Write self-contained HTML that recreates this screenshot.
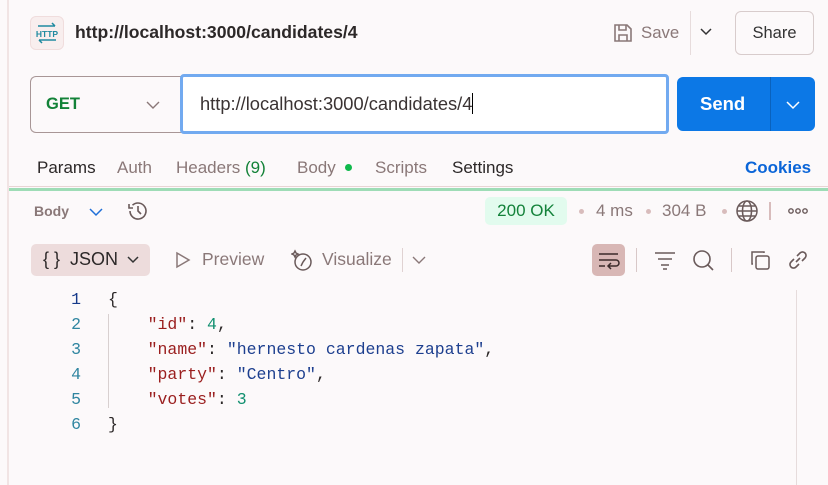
<!DOCTYPE html>
<html><head><style>
*{margin:0;padding:0;box-sizing:border-box}
body{width:828px;height:485px;background:#fcf9fa;font-family:"Liberation Sans",sans-serif;position:relative;overflow:hidden;color:#3a3333}
.a{position:absolute;white-space:nowrap}
.mono{font-family:"Liberation Mono",monospace;font-size:16.5px}
</style></head><body>
<div class="a" style="left:7px;top:0;width:2px;height:485px;background:#f1e4e4"></div>
<div class="a" style="left:30px;top:16px;width:34px;height:34px;border:1px solid #f0dddd;border-radius:6px;background:#f8eeee"></div>
<svg class="a" style="left:34px;top:20px" width="26" height="26" viewBox="0 0 26 26"><path d="M4 6h17M18 3l3 3" stroke="#1f8aa0" stroke-width="1.5" fill="none"/><text x="13" y="17" font-size="8.5" font-family="Liberation Sans" font-weight="bold" text-anchor="middle" fill="#1f8aa0">HTTP</text><path d="M5 20h17M8 23l-3-3" stroke="#1f8aa0" stroke-width="1.5" fill="none"/></svg>
<div class="a" style="left:75px;top:22px;font-size:17.6px;font-weight:bold;color:#2c2828">http://localhost:3000/candidates/4</div>
<svg class="a" style="left:612px;top:22px" width="22" height="22" viewBox="0 0 22 22" fill="none" stroke="#8a7878" stroke-width="1.6"><path d="M3 3h12l4 4v12H3z"/><path d="M7 3v5h7V3M7 19v-6h8v6"/></svg>
<div class="a" style="left:641px;top:23px;font-size:16.8px;color:#8a7878">Save</div>
<div class="a" style="left:690px;top:11px;width:1px;height:44px;background:#e7dcdc"></div>
<svg class="a" style="left:700px;top:27px" width="12" height="10"><path d="M1 2l5 5 5-5" stroke="#333" stroke-width="1.5" fill="none"/></svg>
<div class="a" style="left:735px;top:11px;width:79px;height:44px;border:1px solid #d8cccc;border-radius:6px;font-size:16.5px;text-align:center;line-height:42px;color:#333">Share</div>
<div class="a" style="left:30px;top:76px;width:152px;height:57px;border:1px solid #a89696;border-right:none;border-radius:6px 0 0 6px"></div>
<div class="a" style="left:46px;top:95px;font-size:16.5px;font-weight:bold;color:#138238">GET</div>
<svg class="a" style="left:146px;top:100px" width="14" height="10"><path d="M1 2l6 6 6-6" stroke="#8a7878" stroke-width="1.4" fill="none"/></svg>
<div class="a" style="left:180px;top:74px;width:489px;height:60px;border:3px solid #72aaf0;border-radius:4px;background:#fff"></div>
<div class="a" style="left:200px;top:93px;font-size:18.3px;color:#3a3333">http://localhost:3000/candidates/4<span style="display:inline-block;width:1px;height:21px;background:#000;vertical-align:-4px"></span></div>
<div class="a" style="left:677px;top:77px;width:138px;height:54px;background:#0c78e6;border-radius:6px"></div>
<div class="a" style="left:770px;top:77px;width:1px;height:54px;background:#0a62bd"></div>
<div class="a" style="left:700px;top:93px;font-size:18.5px;font-weight:bold;color:#fff">Send</div>
<svg class="a" style="left:786px;top:100px" width="14" height="10"><path d="M1 2l6 6 6-6" stroke="#fff" stroke-width="1.5" fill="none"/></svg>
<div class="a" style="left:37px;top:158px;font-size:17px;color:#2c2828">Params</div>
<div class="a" style="left:117px;top:158px;font-size:17px;color:#8a7878">Auth</div>
<div class="a" style="left:176px;top:158px;font-size:17px;color:#8a7878">Headers <span style="color:#138238">(9)</span></div>
<div class="a" style="left:297px;top:158px;font-size:17px;color:#8a7878">Body</div>
<div class="a" style="left:345px;top:164px;width:7px;height:7px;border-radius:50%;background:#10b94c"></div>
<div class="a" style="left:375px;top:158px;font-size:17px;color:#8a7878">Scripts</div>
<div class="a" style="left:452px;top:158px;font-size:17px;color:#2c2828">Settings</div>
<div class="a" style="left:745px;top:158px;font-size:17px;font-weight:bold;color:#0b65d8">Cookies</div>
<div class="a" style="left:9px;top:186px;width:819px;height:1px;background:#e8d4d4"></div>
<div class="a" style="left:9px;top:188px;width:819px;height:3px;background:#9edcb6"></div>
<div class="a" style="left:34px;top:203px;font-size:14px;font-weight:bold;color:#8a7878">Body</div>
<svg class="a" style="left:89px;top:207px" width="14" height="10"><path d="M1 2l6 6 6-6" stroke="#1f6fd8" stroke-width="1.5" fill="none"/></svg>
<svg class="a" style="left:126px;top:200px" width="24" height="22" viewBox="0 0 24 22" fill="none" stroke="#6a5a5a" stroke-width="1.6"><path d="M4 11a8 8 0 1 0 2.5-5.8"/><path d="M3 4v4h4M12 6v5l3 3"/></svg>
<div class="a" style="left:485px;top:197px;width:82px;height:28px;background:#e2fbee;border-radius:5px;font-size:17px;color:#13823a;text-align:center;line-height:28px">200 OK</div>
<div class="a" style="left:579px;top:209px;width:5px;height:5px;border-radius:50%;background:#d8bcbc"></div>
<div class="a" style="left:596px;top:201px;font-size:17px;color:#8a7878">4 ms</div>
<div class="a" style="left:646px;top:209px;width:5px;height:5px;border-radius:50%;background:#d8bcbc"></div>
<div class="a" style="left:662px;top:201px;font-size:17px;color:#8a7878">304 B</div>
<div class="a" style="left:722px;top:209px;width:5px;height:5px;border-radius:50%;background:#d8bcbc"></div>
<svg class="a" style="left:735px;top:199px" width="24" height="24" viewBox="0 0 24 24" fill="none" stroke="#6a5a5a" stroke-width="1.5"><circle cx="12" cy="12" r="10"/><ellipse cx="12" cy="12" rx="4.5" ry="10"/><path d="M2 12h20M4 7h16M4 17h16"/></svg>
<div class="a" style="left:769px;top:202px;width:2px;height:18px;background:#d8bcbc"></div>
<svg class="a" style="left:788px;top:207px" width="20" height="8" fill="none" stroke="#6a5a5a" stroke-width="1.4"><circle cx="3" cy="4" r="2.2"/><circle cx="10" cy="4" r="2.2"/><circle cx="17" cy="4" r="2.2"/></svg>
<div class="a" style="left:31px;top:244px;width:119px;height:32px;background:#eddcdc;border-radius:5px"></div>
<div class="a" style="left:43px;top:249px;font-size:18px;color:#2c2828">{ }&nbsp; JSON</div>
<svg class="a" style="left:127px;top:256px" width="12" height="8"><path d="M1 1l5 5 5-5" stroke="#333" stroke-width="1.5" fill="none"/></svg>
<svg class="a" style="left:175px;top:251px" width="16" height="18"><path d="M2 2l12 7-12 7z" stroke="#8a7878" stroke-width="1.5" fill="none"/></svg>
<div class="a" style="left:202px;top:249px;font-size:17.5px;color:#8a7878">Preview</div>
<svg class="a" style="left:291px;top:248px" width="24" height="24" viewBox="0 0 24 24" fill="none" stroke="#6a5a5a" stroke-width="1.5"><circle cx="12" cy="14" r="8"/><path d="M12 14l3-4M12 14l-2 4M4 3l1 2 2 1-2 1-1 2-1-2-2-1 2-1z"/></svg>
<div class="a" style="left:322px;top:249px;font-size:17.5px;color:#8a7878">Visualize</div>
<div class="a" style="left:402px;top:248px;width:1px;height:24px;background:#e0d2d2"></div>
<svg class="a" style="left:412px;top:256px" width="14" height="9"><path d="M1 1l6 6 6-6" stroke="#8a7878" stroke-width="1.4" fill="none"/></svg>
<div class="a" style="left:592px;top:244px;width:33px;height:32px;background:#d8b7b5;border-radius:5px"></div>
<svg class="a" style="left:597px;top:249px" width="24" height="22" fill="none" stroke="#3a2a2a" stroke-width="1.5"><path d="M2 5h19M2 11h17a3 3 0 0 1 0 6h-7M14 14l-3 3 3 3M2 17h6"/></svg>
<div class="a" style="left:636px;top:248px;width:1px;height:24px;background:#d8c8c8"></div>
<svg class="a" style="left:654px;top:250px" width="22" height="20" fill="none" stroke="#6a5a5a" stroke-width="1.5"><path d="M1 3h20M4 9h14M7 15h8M9 19h4"/></svg>
<svg class="a" style="left:692px;top:249px" width="24" height="24" fill="none" stroke="#6a5a5a" stroke-width="1.6"><circle cx="10" cy="10" r="8"/><path d="M16 16l5 5"/></svg>
<div class="a" style="left:731px;top:248px;width:1px;height:24px;background:#d8c8c8"></div>
<svg class="a" style="left:749px;top:249px" width="22" height="22" fill="none" stroke="#6a5a5a" stroke-width="1.5"><rect x="7" y="7" width="13" height="13" rx="2"/><path d="M4 15H3V3h12v1"/></svg>
<svg class="a" style="left:786px;top:248px" width="24" height="24" fill="none" stroke="#6a5a5a" stroke-width="1.6"><path d="M10 14l4-4M8 11l-3 3a3.5 3.5 0 0 0 5 5l3-3M16 13l3-3a3.5 3.5 0 0 0-5-5l-3 3"/></svg>
<div class="a" style="left:796px;top:290px;width:1px;height:195px;background:#e6dcdc"></div>
<div class="a" style="left:108px;top:314px;width:1px;height:94px;background:#d8d0d0"></div>
<div class="a mono" style="left:55px;top:287px;line-height:25px;width:26px;text-align:right;color:#2f85a0">
<span style="color:#163a8a">1</span><br>2<br>3<br>4<br>5<br>6</div>
<div class="a mono" style="left:108px;top:287px;line-height:25px;color:#2c2828">{<br>
&nbsp;&nbsp;&nbsp;&nbsp;<span style="color:#9a1e1e">"id"</span>: <span style="color:#119070">4</span>,<br>
&nbsp;&nbsp;&nbsp;&nbsp;<span style="color:#9a1e1e">"name"</span>: <span style="color:#1d3f8f">"hernesto cardenas zapata"</span>,<br>
&nbsp;&nbsp;&nbsp;&nbsp;<span style="color:#9a1e1e">"party"</span>: <span style="color:#1d3f8f">"Centro"</span>,<br>
&nbsp;&nbsp;&nbsp;&nbsp;<span style="color:#9a1e1e">"votes"</span>: <span style="color:#119070">3</span><br>}</div>
</body></html>
